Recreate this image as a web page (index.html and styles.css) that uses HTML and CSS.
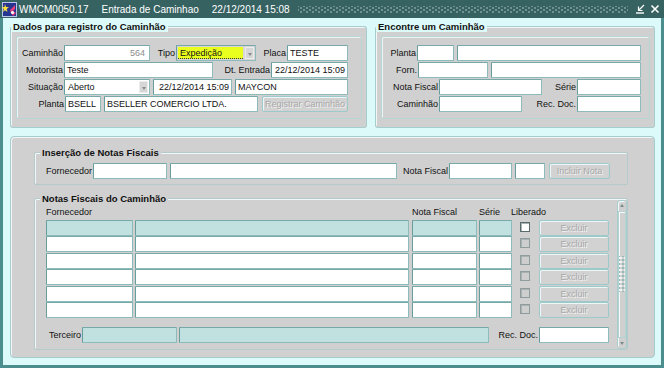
FILE: index.html
```html
<!DOCTYPE html>
<html lang="pt-BR">
<head>
    <meta charset="UTF-8">
    <title>Entrada de Caminhao</title>
    <link rel="stylesheet" href="styles.css">
</head>
<body>
<div class="window">
    <div class="titlebar">
        <svg class="app-icon" width="15" height="15" viewBox="0 0 15 15">
            <rect x="0.5" y="0.5" width="14" height="14" fill="#26358f" stroke="#b9c4ea"/>
            <path d="M3 2l1 3 3 .3-2.4 1.8.9 3-2.5-1.8L.9 10l1-3L-.1 5.3 2.5 5z" fill="#ffe23a"/>
            <path d="M8 8l5-5v4l-2 2 3 2-3 3-2-3z" fill="#e33f7a"/>
            <circle cx="10.5" cy="10.5" r="1.6" fill="#fff"/>
        </svg>
        <span class="title-code">WMCM0050.17</span>
        <span class="title-name">Entrada de Caminhao</span>
        <span class="title-date">22/12/2014 15:08</span>
        <span class="grip"></span>
        <svg class="win-btn" width="10" height="10" viewBox="0 0 10 10">
            <path d="M1 9h8" stroke="#fff" stroke-width="1.4"/>
            <path d="M9 1L4 6M3.5 2.5v4h4" stroke="#fff" stroke-width="1.2" fill="none"/>
        </svg>
        <svg class="win-btn close" width="10" height="10" viewBox="0 0 10 10">
            <path d="M1.5 1.5l7 7M8.5 1.5l-7 7" stroke="#fff" stroke-width="1.6"/>
        </svg>
    </div>

    <div class="client">
        <div class="top">
            <fieldset class="frame top-frame reg">
                <legend>Dados para registro do Caminhão</legend>
                <div class="inset">
                    <div class="row">
                        <span class="lbl w47">Caminhão</span>
                        <span class="fld w86 num">564</span>
                        <span class="lbl w26">Tipo</span>
                        <span class="sel tipo w80"><span class="sel-val">Expedição</span><span class="sel-arrow"></span></span>
                        <span class="lbl w31">Placa</span>
                        <span class="fld w61">TESTE</span>
                    </div>
                    <div class="row">
                        <span class="lbl w47">Motorista</span>
                        <span class="fld w149">Teste</span>
                        <span class="lbl w58">Dt. Entrada</span>
                        <span class="fld w77 right">22/12/2014 15:09</span>
                    </div>
                    <div class="row">
                        <span class="lbl w47">Situação</span>
                        <span class="sel w86"><span class="sel-val">Aberto</span><span class="sel-arrow"></span></span>
                        <span class="fld w79 ml3 right">22/12/2014 15:09</span>
                        <span class="fld w113 ml3">MAYCON</span>
                    </div>
                    <div class="row">
                        <span class="lbl w48">Planta</span>
                        <span class="fld w36">BSELL</span>
                        <span class="fld w154 ml3">BSELLER COMERCIO LTDA.</span>
                        <span class="btn w86 ml4">Registrar Caminhão</span>
                    </div>
                </div>
            </fieldset>

            <fieldset class="frame top-frame find">
                <legend>Encontre um Caminhão</legend>
                <div class="inset">
                    <div class="row">
                        <span class="lbl w35">Planta</span>
                        <span class="fld w37"></span>
                        <span class="fld w184 ml3"></span>
                    </div>
                    <div class="row">
                        <span class="lbl w36">Forn.</span>
                        <span class="fld w70"></span>
                        <span class="fld w150 ml3"></span>
                    </div>
                    <div class="row">
                        <span class="lbl w57">Nota Fiscal</span>
                        <span class="fld w103"></span>
                        <span class="lbl w35">Série</span>
                        <span class="fld w64"></span>
                    </div>
                    <div class="row">
                        <span class="lbl w57">Caminhão</span>
                        <span class="fld w83"></span>
                        <span class="lbl w55">Rec. Doc.</span>
                        <span class="fld w64"></span>
                    </div>
                </div>
            </fieldset>
        </div>

        <div class="bottom">
            <fieldset class="frame inner-frame insert">
                <legend>Inserção de Notas Fiscais</legend>
                <div class="row">
                    <span class="lbl w58">Fornecedor</span>
                    <span class="fld w74"></span>
                    <span class="fld w227 ml3"></span>
                    <span class="lbl w52">Nota Fiscal</span>
                    <span class="fld w63"></span>
                    <span class="fld w30 ml3"></span>
                    <span class="btn w61 ml4">Incluir Nota</span>
                </div>
            </fieldset>

            <fieldset class="frame inner-frame notas">
                <legend>Notas Fiscais do Caminhão</legend>
                <div class="notas-wrap">
                    <div class="notas-main">
                        <div class="grid-head">
                            <span class="w366">Fornecedor</span>
                            <span class="w67">Nota Fiscal</span>
                            <span class="w32">Série</span>
                            <span>Liberado</span>
                        </div>
                        <div class="grid">
                            <div class="row">
                                <span class="fld teal w87"></span>
                                <span class="fld teal w274 ml2"></span>
                                <span class="fld teal w65 ml3"></span>
                                <span class="fld teal w33 ml2"></span>
                                <span class="chk on"></span>
                                <span class="btn w70">Excluir</span>
                            </div>
                            <div class="row">
                                <span class="fld w87"></span>
                                <span class="fld w274 ml2"></span>
                                <span class="fld w65 ml3"></span>
                                <span class="fld w33 ml2"></span>
                                <span class="chk"></span>
                                <span class="btn w70">Excluir</span>
                            </div>
                            <div class="row">
                                <span class="fld w87"></span>
                                <span class="fld w274 ml2"></span>
                                <span class="fld w65 ml3"></span>
                                <span class="fld w33 ml2"></span>
                                <span class="chk"></span>
                                <span class="btn w70">Excluir</span>
                            </div>
                            <div class="row">
                                <span class="fld w87"></span>
                                <span class="fld w274 ml2"></span>
                                <span class="fld w65 ml3"></span>
                                <span class="fld w33 ml2"></span>
                                <span class="chk"></span>
                                <span class="btn w70">Excluir</span>
                            </div>
                            <div class="row">
                                <span class="fld w87"></span>
                                <span class="fld w274 ml2"></span>
                                <span class="fld w65 ml3"></span>
                                <span class="fld w33 ml2"></span>
                                <span class="chk"></span>
                                <span class="btn w70">Excluir</span>
                            </div>
                            <div class="row">
                                <span class="fld w87"></span>
                                <span class="fld w274 ml2"></span>
                                <span class="fld w65 ml3"></span>
                                <span class="fld w33 ml2"></span>
                                <span class="chk"></span>
                                <span class="btn w70">Excluir</span>
                            </div>
                        </div>
                        <div class="row terceiro">
                            <span class="lbl w36">Terceiro</span>
                            <span class="fld teal w95"></span>
                            <span class="fld teal w310 ml2"></span>
                            <span class="lbl w50">Rec. Doc.</span>
                            <span class="fld w70"></span>
                        </div>
                    </div>
                    <div class="vscroll">
                        <span class="arrow up"></span>
                        <span class="thumb"><span class="thumb-grip"></span></span>
                        <span class="arrow down"></span>
                    </div>
                </div>
            </fieldset>
        </div>
    </div>
</div>
</body>
</html>
```

FILE: styles.css
```css
* {
    box-sizing: border-box;
}

body {
    margin: 0;
    width: 664px;
    height: 368px;
    overflow: hidden;
    font-family: "Liberation Sans", Arial, sans-serif;
    font-size: 9px;
    color: #111;
    background: #ddfafa;
}

.window {
    display: flex;
    flex-direction: column;
    height: 368px;
}

/* title bar */
.titlebar {
    flex: none;
    height: 18px;
    display: flex;
    align-items: center;
    padding-left: 2px;
    background: #366262;
    color: #fff;
    font-size: 10px;
}

.app-icon {
    flex: none;
    margin-right: 2px;
}

.title-name,
.title-date {
    margin-left: 13px;
}

.grip {
    flex: 1;
    height: 7px;
    margin: 0 7px 0 8px;
    background-image:
        radial-gradient(circle, #86a3a3 0.6px, transparent 1px),
        radial-gradient(circle, #86a3a3 0.6px, transparent 1px);
    background-size: 6px 4px;
    background-position: 0 0, 3px 2px;
}

.win-btn {
    flex: none;
    margin-right: 5px;
}

.win-btn.close {
    margin-right: 4px;
}

/* client area */
.client {
    flex: 1;
    border: 3px solid #4c8d8d;
    border-top: 0;
    padding: 3px 6px 0 7px;
}

.top {
    display: flex;
    gap: 8px;
}

.frame {
    margin: 0;
    padding: 0;
    min-width: 0;
    border: 1px solid #a5cdcd;
    border-radius: 3px;
    background: #d0d0d0;
    box-shadow: inset 1px 1px 0 #f3f6f6;
}

.frame legend {
    padding: 0 2px;
    font-size: 9.5px;
    font-weight: bold;
    line-height: 11px;
    color: #111;
}

.top-frame legend {
    background: #ddfafa;
}

.top-frame.reg {
    width: 357px;
}

.top-frame.find {
    flex: 1;
}

.inset {
    height: 83px;
    margin: 4px 4px 8px 5px;
    padding-top: 8px;
    border: 1px solid #b9d6d6;
    border-radius: 2px;
    box-shadow: inset 1px 1px 0 #eef4f4;
    display: flex;
    flex-direction: column;
    gap: 1px;
}

.row {
    display: flex;
    align-items: center;
    height: 16px;
}

/* labels and fields */
.lbl {
    flex: none;
    padding-right: 1px;
    text-align: right;
    white-space: nowrap;
}

.fld {
    flex: none;
    height: 16px;
    padding: 0 2px;
    line-height: 14px;
    white-space: nowrap;
    overflow: hidden;
    background: #fff;
    border: 1px solid #8dbaba;
    border-left-color: #679d9d;
    border-top-color: #77a9a9;
    border-radius: 1px;
}

.fld.num {
    text-align: right;
    padding-right: 4px;
    color: #8d8d8d;
}

.fld.right {
    text-align: right;
}

.fld.teal {
    background: #c1e0e0;
}

.sel {
    flex: none;
    display: flex;
    height: 16px;
    padding: 1px;
    background: #fff;
    border: 1px solid #8dbaba;
    border-left-color: #679d9d;
    border-top-color: #77a9a9;
    border-radius: 1px;
}

.sel-val {
    flex: 1;
    padding-left: 2px;
    line-height: 12px;
}

.sel.tipo {
    background: #d6d6d6;
}

.sel.tipo .sel-val {
    background: #ebff1f;
    border-bottom: 1px dotted #333;
    margin-right: 2px;
}

.sel-arrow {
    flex: none;
    width: 9px;
    background: #d6d6d6;
    border: 1px solid #ececec;
    position: relative;
}

.sel-arrow::after {
    content: "";
    position: absolute;
    left: 2px;
    top: 5px;
    border-left: 2.5px solid transparent;
    border-right: 2.5px solid transparent;
    border-top: 3px solid #8a8a8a;
}

.btn {
    flex: none;
    height: 16px;
    line-height: 14px;
    text-align: center;
    white-space: nowrap;
    color: #a8a8a8;
    text-shadow: 1px 1px 0 #f2f2f2;
    background: #d2d2d2;
    border: 1px solid #9ccaca;
    border-radius: 2px;
    box-shadow: inset 1px 1px 0 #eef6f6;
}

.chk {
    flex: none;
    width: 10px;
    height: 10px;
    margin: 0 9px 2px 8px;
    background: #cecece;
    border: 1px solid #8f9d9d;
    box-shadow: inset 1px 1px 0 #a9b2b2;
}

.chk.on {
    background: #fff;
    border-color: #5b6b6b;
}

/* bottom panel */
.bottom {
    height: 222px;
    margin-top: 8px;
    padding: 10px 26px 0 23px;
    background: #d0d0d0;
    border: 1px solid #a5cdcd;
    border-radius: 4px;
    box-shadow: inset 1px 1px 0 #f3f6f6;
}

.inner-frame {
    border-color: #b3cbcb;
    border-radius: 2px;
}

.inner-frame legend {
    margin-left: 5px;
    background: #d0d0d0;
}

.insert {
    padding: 5px 0;
}

.notas {
    margin-top: 8px;
    padding-bottom: 6px;
}

.notas-wrap {
    display: flex;
}

.notas-main {
    flex: 1;
    padding-left: 11px;
}

.grid-head {
    display: flex;
    height: 16px;
    padding-top: 3px;
    line-height: 11px;
}

.grid-head span {
    flex: none;
}

.grid {
    display: flex;
    flex-direction: column;
    gap: 0.4px;
}

.terceiro {
    margin-top: 9px;
}

.vscroll {
    flex: none;
    width: 10px;
    margin: -4px 0 -6px;
    display: flex;
    flex-direction: column;
    align-items: center;
    border: 1px solid #a9cccc;
    border-radius: 3px;
    box-shadow: inset 1px 1px 0 #f3f8f8;
}

.arrow {
    flex: none;
    height: 9px;
    width: 6px;
    position: relative;
}

.arrow::after {
    content: "";
    position: absolute;
    left: 0.5px;
    top: 3px;
    border-left: 2.5px solid transparent;
    border-right: 2.5px solid transparent;
}

.arrow.up::after {
    border-bottom: 3px solid #7c8a8a;
}

.arrow.down::after {
    border-top: 3px solid #7c8a8a;
}

.thumb {
    flex: 1;
    width: 8px;
    margin: 1px 0;
    display: flex;
    align-items: center;
    justify-content: center;
    border: 1px solid #b4d3d3;
    box-shadow: inset 1px 1px 0 #f6fafa;
}

.thumb-grip {
    width: 6px;
    height: 36px;
    background-image:
        radial-gradient(circle, #eef4f4 0.7px, transparent 1.1px),
        radial-gradient(circle, #9ab8b8 0.7px, transparent 1.1px);
    background-size: 4px 4px;
    background-position: 0 0, 2px 2px;
}

/* widths and gaps */
.w26 { width: 26px; }
.w30 { width: 30px; }
.w31 { width: 31px; }
.w32 { width: 32px; }
.w33 { width: 33px; }
.w35 { width: 35px; }
.w36 { width: 36px; }
.w37 { width: 37px; }
.w47 { width: 47px; }
.w48 { width: 48px; }
.w50 { width: 50px; }
.w52 { width: 52px; }
.w55 { width: 55px; }
.w57 { width: 57px; }
.w58 { width: 58px; }
.w61 { width: 61px; }
.w63 { width: 63px; }
.w64 { width: 64px; }
.w65 { width: 65px; }
.w67 { width: 67px; }
.w70 { width: 70px; }
.w74 { width: 74px; }
.w77 { width: 77px; }
.w79 { width: 79px; }
.w80 { width: 80px; }
.w83 { width: 83px; }
.w86 { width: 86px; }
.w87 { width: 87px; }
.w95 { width: 95px; }
.w103 { width: 103px; }
.w113 { width: 113px; }
.w149 { width: 149px; }
.w150 { width: 150px; }
.w154 { width: 154px; }
.w184 { width: 184px; }
.w227 { width: 227px; }
.w274 { width: 274px; }
.w310 { width: 310px; }
.w366 { width: 366px; }

.ml2 { margin-left: 2px; }
.ml3 { margin-left: 3px; }
.ml4 { margin-left: 4px; }
```
